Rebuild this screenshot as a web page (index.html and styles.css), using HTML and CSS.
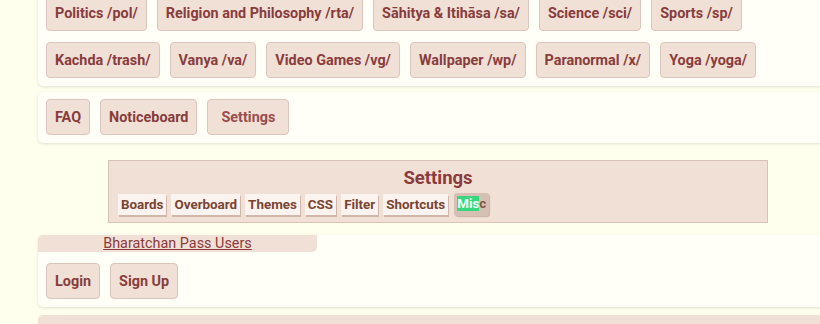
FILE: index.html
```html
<!DOCTYPE html>
<html lang="en">
<head>
    <meta charset="UTF-8">
    <meta name="viewport" content="width=device-width, initial-scale=1.0">
    <title>Bharatchan</title>
    <link rel="stylesheet" href="styles.css">
</head>
<body>
    <div class="wrap">
        <div class="panel boards">
            <a class="btn" href="#">Politics /pol/</a>
            <a class="btn" href="#">Religion and Philosophy /rta/</a>
            <a class="btn" href="#">Sāhitya &amp; Itihāsa /sa/</a>
            <a class="btn" href="#">Science /sci/</a>
            <a class="btn" href="#">Sports /sp/</a>
            <a class="btn" href="#">Kachda /trash/</a>
            <a class="btn" href="#">Vanya /va/</a>
            <a class="btn" href="#">Video Games /vg/</a>
            <a class="btn" href="#">Wallpaper /wp/</a>
            <a class="btn" href="#">Paranormal /x/</a>
            <a class="btn" href="#">Yoga /yoga/</a>
        </div>

        <div class="panel links">
            <a class="btn" href="#">FAQ</a>
            <a class="btn" href="#">Noticeboard</a>
            <button class="btn btn-settings">Settings</button>
        </div>

        <div class="settings">
            <h2>Settings</h2>
            <div class="tabs">
                <span class="tab">Boards</span>
                <span class="tab">Overboard</span>
                <span class="tab">Themes</span>
                <span class="tab">CSS</span>
                <span class="tab">Filter</span>
                <span class="tab">Shortcuts</span>
                <span class="tab active"><span class="hl">Mis</span>c</span>
            </div>
        </div>

        <div class="panel pass">
            <div class="pass-head"><a href="#">Bharatchan Pass Users</a></div>
            <div class="pass-body">
                <a class="btn" href="#">Login</a>
                <a class="btn" href="#">Sign Up</a>
            </div>
        </div>

        <div class="next"></div>
    </div>
</body>
</html>
```

FILE: styles.css
```css
body {
    margin: 0;
    background: #ffffee;
    font-family: Roboto, 'Liberation Sans', sans-serif;
    overflow: hidden;
}

.wrap {
    width: 800px;
    margin: -13px 0 0 38px;
}

.panel {
    background: #fffff7;
    border-radius: 5px;
    box-shadow: 0 1px 3px rgba(0, 0, 0, 0.12);
}

.boards {
    display: flex;
    flex-wrap: wrap;
    gap: 11px 10px;
    padding: 8px 8px 8px;
}

.links {
    display: flex;
    gap: 10px;
    margin-top: 6px;
    padding: 7px 8px 8px;
}

.btn {
    display: inline-flex;
    align-items: center;
    height: 36px;
    box-sizing: border-box;
    padding: 0 8px;
    background: #f0e0d6;
    border: 1px solid #dcc5bd;
    border-radius: 4px;
    color: #893c3c;
    font-family: inherit;
    font-size: 14.4px;
    font-weight: bold;
    text-decoration: none;
}

.btn-settings {
    padding: 0 13px;
    color: #9a4d4d;
}

.settings {
    width: 660px;
    box-sizing: border-box;
    margin: 17px auto 0;
    padding: 7px 9px 6px;
    background: #f0e0d6;
    border: 1px solid #d9c3b8;
    text-align: center;
}

.settings h2 {
    margin: 0;
    font-size: 18.5px;
    line-height: 20px;
    color: #8b3b3b;
}

.tabs {
    display: flex;
    align-items: center;
    gap: 5px;
    margin-top: 5px;
}

.tab {
    padding: 3px 3px 2px;
    background: #faf3ef;
    box-shadow: 1px 2px 0 #cfb7aa;
    color: #7a4431;
    font-size: 13.4px;
    font-weight: bold;
    line-height: 16px;
}

.tab.active {
    margin-left: 1px;
    padding: 3px 3px 4px 3px;
    background: #d5c0b3;
    border-radius: 3px;
    box-shadow: 1px 1px 1px #c9b1a4;
    color: #85564a;
}

.hl {
    background: #37d77d;
    color: #effffb;
}

.pass {
    margin-top: 12px;
    padding-bottom: 8px;
}

.pass-head {
    width: 279px;
    height: 17px;
    background: #f0e0d6;
    border-radius: 5px 0 5px 0;
    text-align: center;
    font-size: 14.4px;
    line-height: 18px;
}

.pass-head a {
    color: #8b3b3b;
}

.pass-body {
    display: flex;
    gap: 10px;
    padding: 11px 8px 0;
}

.next {
    height: 20px;
    margin-top: 8px;
    background: #f0e0d6;
    border-radius: 5px 0 0 0;
}
```
